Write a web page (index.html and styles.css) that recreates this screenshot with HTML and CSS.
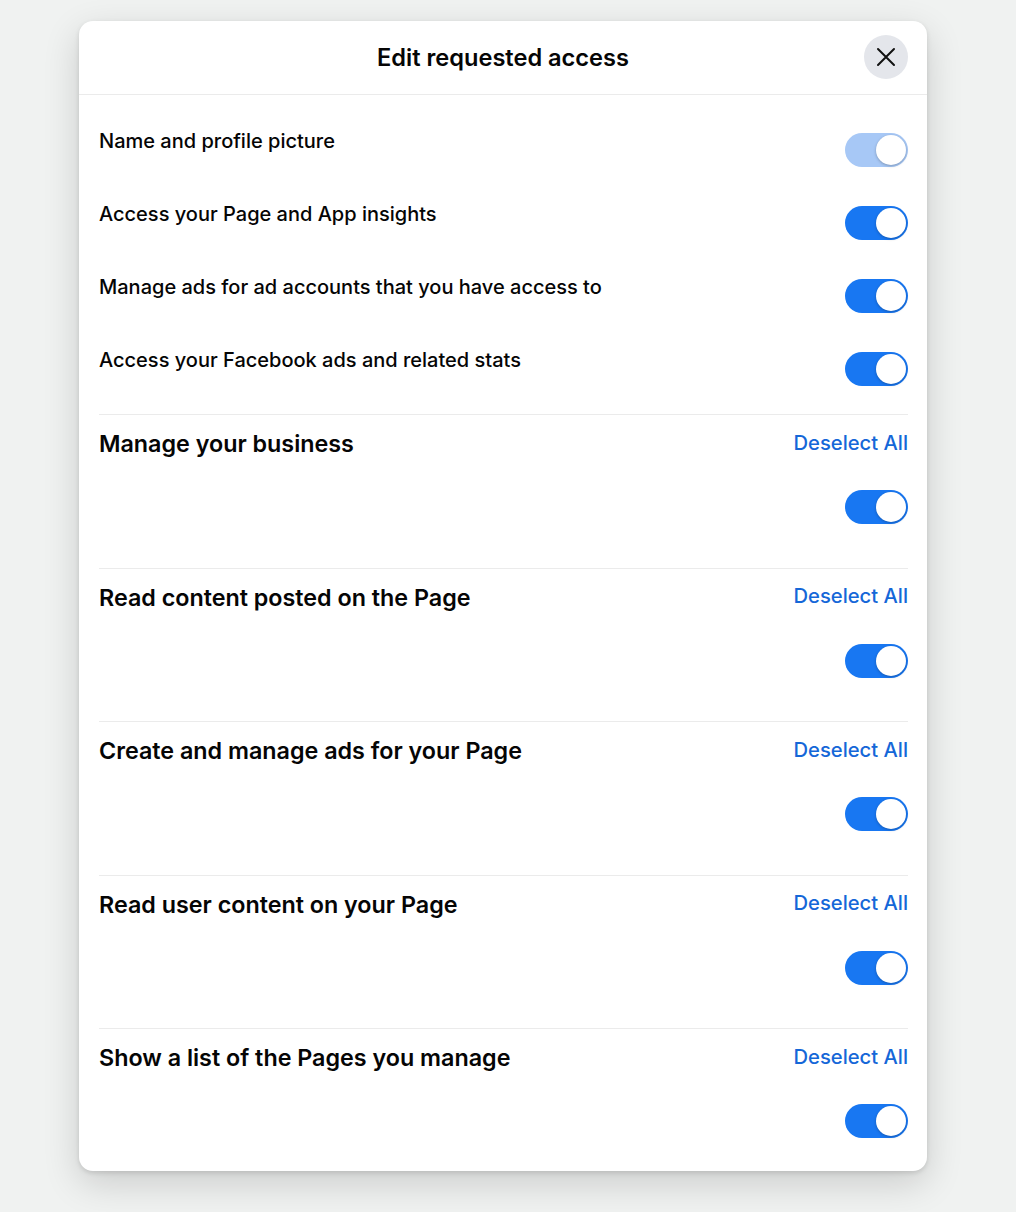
FILE: index.html
```html
<!DOCTYPE html>
<html lang="en">
  <head>
    <meta charset="utf-8" />
    <title>Edit requested access</title>
    <link rel="stylesheet" href="styles.css">
  </head>
  <body>
    <div class="modal">
      <header class="modal-header">
        <h2 class="modal-title">Edit requested access</h2>
        <button class="close-button" aria-label="Close">
          <svg width="20" height="20" viewBox="0 0 20 20">
            <path d="M2 2 L18 18 M18 2 L2 18" stroke="#111" stroke-width="2" stroke-linecap="round" />
          </svg>
        </button>
      </header>

      <div class="modal-body">
        <div class="basic-list">
          <div class="perm-row">
            <span class="perm-text">Name and profile picture</span>
            <span class="toggle toggle-disabled"><span class="knob"></span></span>
          </div>
          <div class="perm-row">
            <span class="perm-text">Access your Page and App insights</span>
            <span class="toggle"><span class="knob"></span></span>
          </div>
          <div class="perm-row">
            <span class="perm-text">Manage ads for ad accounts that you have access to</span>
            <span class="toggle"><span class="knob"></span></span>
          </div>
          <div class="perm-row">
            <span class="perm-text">Access your Facebook ads and related stats</span>
            <span class="toggle"><span class="knob"></span></span>
          </div>
        </div>

        <section class="perm-section">
          <div class="section-head">
            <h3 class="section-title">Manage your business</h3>
            <a class="deselect" href="#">Deselect All</a>
          </div>
          <div class="section-toggle"><span class="toggle"><span class="knob"></span></span></div>
        </section>

        <section class="perm-section">
          <div class="section-head">
            <h3 class="section-title">Read content posted on the Page</h3>
            <a class="deselect" href="#">Deselect All</a>
          </div>
          <div class="section-toggle"><span class="toggle"><span class="knob"></span></span></div>
        </section>

        <section class="perm-section">
          <div class="section-head">
            <h3 class="section-title">Create and manage ads for your Page</h3>
            <a class="deselect" href="#">Deselect All</a>
          </div>
          <div class="section-toggle"><span class="toggle"><span class="knob"></span></span></div>
        </section>

        <section class="perm-section">
          <div class="section-head">
            <h3 class="section-title">Read user content on your Page</h3>
            <a class="deselect" href="#">Deselect All</a>
          </div>
          <div class="section-toggle"><span class="toggle"><span class="knob"></span></span></div>
        </section>

        <section class="perm-section last">
          <div class="section-head">
            <h3 class="section-title">Show a list of the Pages you manage</h3>
            <a class="deselect" href="#">Deselect All</a>
          </div>
          <div class="section-toggle"><span class="toggle"><span class="knob"></span></span></div>
        </section>
      </div>
    </div>
  </body>
</html>
```

FILE: styles.css
```css
html,
body {
  margin: 0;
  padding: 0;
  background-color: #f0f2f1;
  font-family: Inter, "Noto Sans", sans-serif;
  color: #050505;
  -webkit-font-smoothing: antialiased;
}

body {
  min-height: 100vh;
  padding: 21px 0 41px 79px;
  box-sizing: border-box;
}

.modal {
  width: 848px;
  background-color: #ffffff;
  border-radius: 14px;
  box-shadow: 0 12px 36px rgba(0, 0, 0, 0.16), 0 2px 5px rgba(0, 0, 0, 0.12);
  overflow: hidden;
}

.modal-header {
  height: 73px;
  display: flex;
  align-items: center;
  justify-content: center;
  position: relative;
  border-bottom: 1px solid #ebebeb;
}

.modal-title {
  margin: 0;
  font-size: 23.6px;
  font-weight: 600;
  line-height: 28px;
}

.close-button {
  position: absolute;
  right: 19px;
  top: 14px;
  width: 44px;
  height: 44px;
  border: none;
  border-radius: 50%;
  background-color: #e4e6eb;
  display: flex;
  align-items: center;
  justify-content: center;
  padding: 0;
  cursor: pointer;
}

.modal-body {
  padding: 0 19px 0 20px;
}

.basic-list {
  padding-top: 24px;
  padding-bottom: 3px;
}

.perm-row {
  height: 73px;
  display: flex;
  justify-content: space-between;
  align-items: flex-start;
}

.perm-text {
  margin-top: 10px;
  font-size: 20px;
  font-weight: 500;
  line-height: 24px;
}

.toggle {
  margin-top: 14px;
  width: 63px;
  height: 34px;
  border-radius: 17px;
  background-color: #1877f2;
  position: relative;
  flex-shrink: 0;
}

.toggle-disabled {
  background-color: #a7c8f6;
}

.knob {
  position: absolute;
  right: 2px;
  top: 2px;
  width: 30px;
  height: 30px;
  border-radius: 50%;
  background-color: #ffffff;
  box-shadow: 0 1px 3px rgba(0, 0, 0, 0.25);
}

.perm-section {
  border-top: 1px solid #ebebeb;
  padding-top: 15px;
  padding-bottom: 43.5px;
}

.perm-section.last {
  padding-bottom: 33px;
}

.section-head {
  height: 28px;
  display: flex;
  justify-content: space-between;
  align-items: center;
}

.section-title {
  margin: 0;
  font-size: 23.3px;
  font-weight: 600;
  line-height: 28px;
}

.deselect {
  font-size: 20.2px;
  font-weight: 500;
  color: #1567d8;
  text-decoration: none;
  margin-top: -4px;
}

.section-toggle {
  display: flex;
  justify-content: flex-end;
  margin-top: 32px;
}

.section-toggle .toggle {
  margin-top: 0;
}
```
